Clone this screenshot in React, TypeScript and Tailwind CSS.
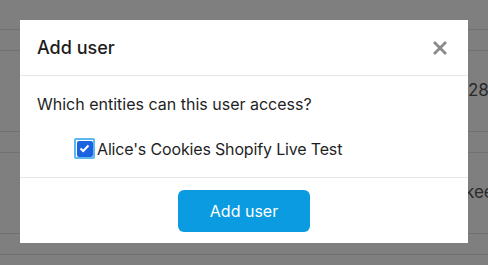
import { useState } from 'react'

const rows = [
  { right: '28', pad: 'pl-[468px]' },
  { right: 'kee', pad: 'pl-[465px]' },
  { right: '', pad: 'pl-[468px]' },
]

export default function App() {
  const [checked, setChecked] = useState(true)

  return (
    <div className="relative h-[265px] w-[488px] overflow-hidden bg-white font-['Inter',sans-serif] text-[#222]">
      {/* page behind the overlay */}
      <div className="flex flex-col pt-[29px]">
        {rows.map((row, i) => (
          <div key={i}>
            <div className="h-[22px] border-y border-[#e2e2e2]" />
            <div className={`flex h-[80px] items-center whitespace-nowrap text-[17px] text-[#555] ${row.pad}`}>
              {row.right}
            </div>
          </div>
        ))}
      </div>
      <div className="absolute inset-0 bg-black/50" />

      {/* modal */}
      <div className="absolute left-[20px] top-[20px] flex w-[448px] flex-col bg-white">
        <div className="flex h-[56px] items-center justify-between border-b border-[#e6e6e6] pl-[17px] pr-[21px]">
          <h2 className="text-[18px] font-medium text-[#1c1c1c]">Add user</h2>
          <button className="flex h-[14px] w-[14px] items-center justify-center text-[#8a8a8a]">
            <svg width="14" height="14" viewBox="0 0 14 14">
              <path d="M1 1L13 13M13 1L1 13" stroke="currentColor" strokeWidth="2.8" />
            </svg>
          </button>
        </div>
        <div className="flex h-[101px] flex-col px-[17px] pt-[18px]">
          <p className="text-[16px] leading-[20px] text-[#1f1f1f]">Which entities can this user access?</p>
          <label className="mt-[24px] flex items-center gap-[2px] pl-[37px]">
            <span
              onClick={() => setChecked(!checked)}
              className="flex h-[21px] w-[21px] items-center justify-center rounded-[2px] border-2 border-[#5bb8f0]"
            >
              <span className="flex h-[16px] w-[16px] items-center justify-center rounded-[2px] bg-[#1b62e0]">
                {checked && (
                  <svg width="11" height="9" viewBox="0 0 11 9">
                    <path d="M1.5 4.5L4.2 7L9.5 1.5" fill="none" stroke="white" strokeWidth="2" />
                  </svg>
                )}
              </span>
            </span>
            <span className="text-[16px] leading-[20px] tracking-[-0.01em] text-[#1f1f1f]">
              Alice's Cookies Shopify Live Test
            </span>
          </label>
        </div>
        <div className="flex h-[66px] items-start justify-center border-t border-[#e6e6e6] pt-[12px]">
          <button className="h-[42px] w-[132px] rounded-[6px] bg-[#0a9be0] text-[16px] text-white">
            Add user
          </button>
        </div>
      </div>
    </div>
  )
}
